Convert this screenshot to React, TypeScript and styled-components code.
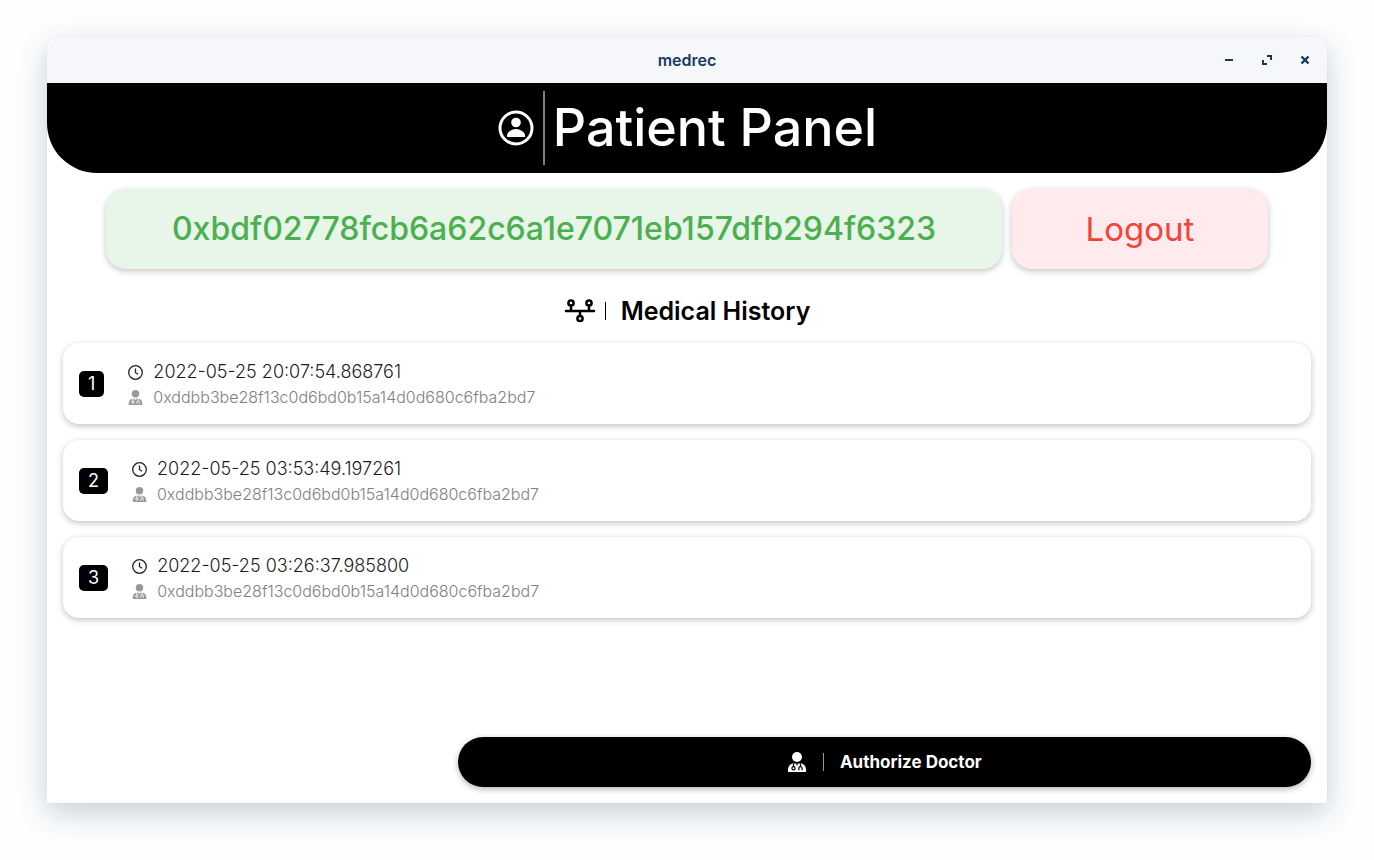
import React from "react";
import styled, { createGlobalStyle } from "styled-components";

const GlobalStyle = createGlobalStyle`
  *, *::before, *::after { box-sizing: border-box; }
  body {
    margin: 0;
    background: #fdfefe;
    color: #000;
    font-family: Inter, "Noto Sans", sans-serif;
  }
  button { font: inherit; border: 0; cursor: pointer; }
  svg { display: block; flex: none; }
`;

const Desktop = styled.div`
  display: flex;
  min-height: 100vh;
  padding: 37px 47px 57px;
`;

const Window = styled.div`
  display: flex;
  flex: 1;
  flex-direction: column;
  min-width: 0;
  background: #fff;
  border-radius: 10px 10px 0 0;
  box-shadow: 0 0 1px rgba(150, 170, 195, 0.5), 0 10px 30px rgba(30, 60, 90, 0.24);
`;

const TitleBar = styled.div`
  display: grid;
  grid-template-columns: 1fr auto 1fr;
  align-items: center;
  height: 46px;
  background: #f5f7fb;
  border-radius: 10px 10px 0 0;
  color: #17395e;
`;

const WindowTitle = styled.div`
  grid-column: 2;
  font-size: 16px;
  font-weight: 600;
  line-height: 20px;
`;

const WindowControls = styled.div`
  display: flex;
  justify-content: flex-end;
  gap: 14px;
  padding-right: 10px;
`;

const WindowButton = styled.button`
  display: grid;
  place-items: center;
  width: 24px;
  height: 24px;
  padding: 0;
  background: none;
  color: inherit;
`;

const Header = styled.header`
  display: flex;
  align-items: center;
  justify-content: center;
  gap: 8px;
  height: 90px;
  background: #000;
  border-radius: 0 0 50px 50px;
  color: #fff;
`;

const HeaderTitle = styled.h1`
  margin: 0;
  font-size: 52px;
  font-weight: 500;
  line-height: 74px;
  white-space: nowrap;
`;

const Divider = styled.span<{ $size: number; $weight?: number; $color: string }>`
  flex: none;
  width: ${(p) => p.$weight ?? 1}px;
  height: ${(p) => p.$size}px;
  background: ${(p) => p.$color};
`;

const Account = styled.section`
  display: flex;
  justify-content: center;
  gap: 10px;
  padding-top: 16px;
`;

const Address = styled.div`
  width: 70%;
  background: #e8f5e9;
  border-radius: 20px;
  box-shadow: 0 2px 6px rgba(0, 0, 0, 0.24);
  color: #4caf50;
  font-size: 32px;
  font-weight: 500;
  line-height: 80px;
  text-align: center;
  white-space: nowrap;
`;

const Logout = styled.button`
  && {
    width: 20%;
    padding: 0;
    background: #ffebee;
    border-radius: 20px;
    box-shadow: 0 2px 6px rgba(0, 0, 0, 0.24);
    color: #f44336;
    font-size: 33px;
    line-height: 80px;
  }
`;

const SectionHeading = styled.div`
  display: flex;
  align-items: center;
  justify-content: center;
  padding: 24px 0 14px;
`;

const HeadingMark = styled.span`
  display: flex;
  align-items: center;
  gap: 9px;
  margin-right: 15px;
`;

const SectionTitle = styled.h2`
  margin: 0;
  font-size: 25px;
  font-weight: 600;
  line-height: 36px;
`;

const Records = styled.ol`
  display: flex;
  flex-direction: column;
  gap: 16px;
  margin: 0;
  padding: 0 16px;
  list-style: none;
`;

const RecordCard = styled.li`
  display: flex;
  align-items: center;
  gap: 24px;
  height: 81px;
  padding: 0 16px;
  background: #fff;
  border-radius: 16px;
  box-shadow: 0 2px 6px rgba(0, 0, 0, 0.24);
`;

const RecordNumber = styled.span`
  padding: 0 9px;
  background: #000;
  border-radius: 5px;
  color: #fff;
  font-size: 18px;
  line-height: 26px;
`;

const RecordDetails = styled.div`
  display: grid;
  gap: 1px;
  padding-top: 2px;
`;

const RecordLine = styled.div<{ $muted?: boolean }>`
  display: flex;
  align-items: center;
  gap: 10px;
  color: ${(p) => (p.$muted ? "#808080" : "#1c1c1c")};
  font-size: ${(p) => (p.$muted ? 16 : 18)}px;
  font-weight: 300;
  line-height: 24px;
`;

const Footer = styled.footer`
  display: flex;
  justify-content: flex-end;
  margin-top: auto;
  padding: 16px;
`;

const AuthorizeButton = styled.button`
  && {
    display: flex;
    align-items: center;
    justify-content: center;
    gap: 16px;
    width: calc((100% + 32px) * 2 / 3);
    height: 50px;
    background: #000;
    border-radius: 25px;
    box-shadow: 0 2px 6px rgba(0, 0, 0, 0.3);
    color: #fff;
    font-size: 17px;
    font-weight: 700;
  }
`;

const DoctorIcon = ({ size, cut, color }: { size: number; cut: string; color: string }) => (
  <svg width={size} height={size} viewBox="0 0 20 20" aria-hidden="true">
    <circle cx="10" cy="5" r="5" fill={color} />
    <path d="M1 20v-2c0-3.900 2.400-6.500 5.500-6.500h7c3.100 0 5.500 2.600 5.500 6.500v2Z" fill={color} />
    <path d="M6.500 11.500v3M13.500 11.500v3" stroke={cut} strokeWidth="1.200" />
    <circle cx="6.500" cy="16.200" r="1.600" fill="none" stroke={cut} strokeWidth="1.200" />
    <path d="M11.900 18.300v-2a1.600 1.600 0 0 1 3.200 0v2" fill="none" stroke={cut} strokeWidth="1.200" />
    <path d="M8.500 11.500 10 13.500l1.500-2Z" fill={cut} />
  </svg>
);

const ClockIcon = () => (
  <svg width="15" height="15" viewBox="0 0 15 15" fill="none" stroke="#222" strokeWidth="1.300" aria-hidden="true">
    <circle cx="7.500" cy="7.500" r="6.800" />
    <path d="M7.500 3.500v4.200l2.700 1.600" />
  </svg>
);

const AccountIcon = () => (
  <svg width="38" height="38" viewBox="0 0 38 38" fill="#fff" aria-hidden="true">
    <circle cx="19" cy="19" r="16" fill="none" stroke="#fff" strokeWidth="3" />
    <circle cx="19" cy="13.500" r="4.800" />
    <path d="M10 28v-1.500c0-3.500 5-6.500 9-6.500s9 3 9 6.500V28Z" />
  </svg>
);

const TimelineIcon = () => (
  <svg width="32" height="26" viewBox="0 0 32 26" fill="none" stroke="#000" strokeWidth="2.500" aria-hidden="true">
    <path d="M2 13h28M7 13V7.500M25 13V7.500M16 13v5" strokeLinecap="round" />
    <circle cx="7" cy="5" r="2.600" />
    <circle cx="25" cy="5" r="2.600" />
    <circle cx="16" cy="20.500" r="2.600" />
  </svg>
);

const doctor = "0xddbb3be28f13c0d6bd0b15a14d0d680c6fba2bd7";
const records = [
  { time: "2022-05-25 20:07:54.868761", doctor },
  { time: "2022-05-25 03:53:49.197261", doctor },
  { time: "2022-05-25 03:26:37.985800", doctor },
];

export default function App() {
  return (
    <Desktop>
      <GlobalStyle />
      <Window>
        <TitleBar>
          <WindowTitle>medrec</WindowTitle>
          <WindowControls>
            <WindowButton aria-label="Minimize">
              <svg width="10" height="10" viewBox="0 0 10 10"><path d="M1 5h8" stroke="currentColor" strokeWidth="2" /></svg>
            </WindowButton>
            <WindowButton aria-label="Maximize">
              <svg width="10" height="10" viewBox="0 0 10 10" fill="none" stroke="currentColor" strokeWidth="2"><path d="M5 1h4v4M1 5v4h4" /></svg>
            </WindowButton>
            <WindowButton aria-label="Close">
              <svg width="10" height="10" viewBox="0 0 10 10"><path d="m1.500 1.500 7 7m0-7-7 7" stroke="currentColor" strokeWidth="2.400" /></svg>
            </WindowButton>
          </WindowControls>
        </TitleBar>
        <Header>
          <AccountIcon />
          <Divider $size={74} $weight={2} $color="#808080" />
          <HeaderTitle>Patient Panel</HeaderTitle>
        </Header>
        <main>
          <Account>
            <Address>0xbdf02778fcb6a62c6a1e7071eb157dfb294f6323</Address>
            <Logout>Logout</Logout>
          </Account>
          <SectionHeading>
            <HeadingMark>
              <TimelineIcon />
              <Divider $size={18} $color="#000" />
            </HeadingMark>
            <SectionTitle>Medical History</SectionTitle>
          </SectionHeading>
          <Records>
            {records.map((record, i) => (
              <RecordCard key={record.time}>
                <RecordNumber>{i + 1}</RecordNumber>
                <RecordDetails>
                  <RecordLine><ClockIcon /><time>{record.time}</time></RecordLine>
                  <RecordLine $muted><DoctorIcon size={15} color="#999" cut="#fff" /><span>{record.doctor}</span></RecordLine>
                </RecordDetails>
              </RecordCard>
            ))}
          </Records>
        </main>
        <Footer>
          <AuthorizeButton>
            <DoctorIcon size={20} color="#fff" cut="#000" />
            <Divider $size={18} $color="#999" />
            Authorize Doctor
          </AuthorizeButton>
        </Footer>
      </Window>
    </Desktop>
  );
}
